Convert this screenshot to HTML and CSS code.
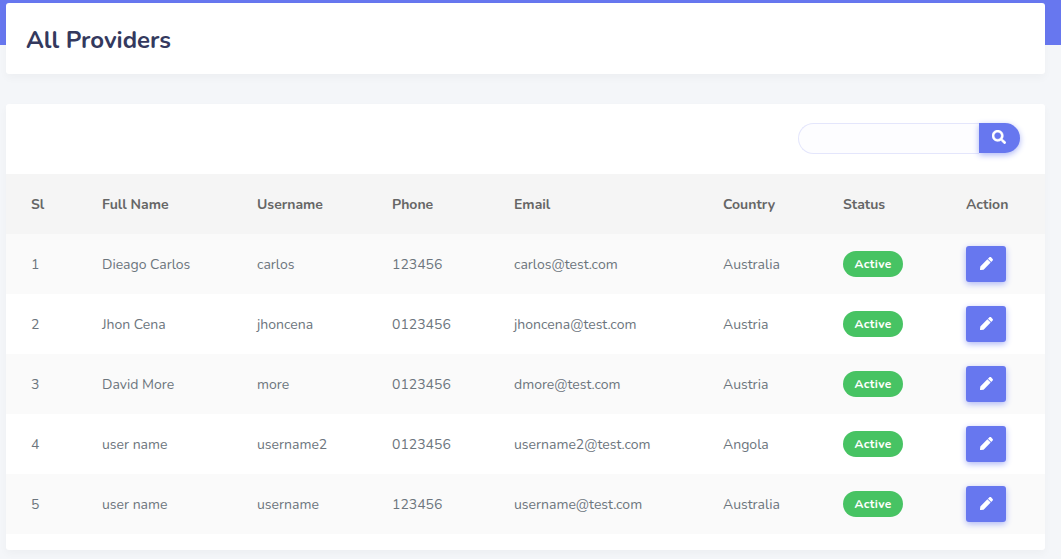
FILE: index.html
```html
<!DOCTYPE html>
<html lang="en">
<head>
<meta charset="utf-8">
<title>All Providers</title>
<link rel="stylesheet" href="styles.css">
</head>
<body>
<svg width="0" height="0" class="sprite" aria-hidden="true">
  <symbol id="pencil" viewBox="0 0 512 512"><path d="M290.740 93.240l128.020 128.020-277.990 277.990-114.140 12.600C11.350 513.540-1.560 500.620.14 485.340l12.700-114.220 277.900-277.880zm207.200-19.060l-60.110-60.110c-18.750-18.750-49.160-18.750-67.910 0l-56.550 56.550 128.020 128.020 56.550-56.550c18.750-18.760 18.750-49.160 0-67.910z"/></symbol>
  <symbol id="search" viewBox="0 0 512 512"><path d="M505 442.700L405.300 343c-4.500-4.500-10.600-7-17-7H372c27.600-35.300 44-79.700 44-128C416 93.100 322.900 0 208 0S0 93.100 0 208s93.100 208 208 208c48.300 0 92.700-16.400 128-44v16.300c0 6.400 2.500 12.500 7 17l99.700 99.700c9.400 9.400 24.600 9.400 33.900 0l28.300-28.300c9.400-9.400 9.400-24.600.1-34zM208 336c-70.700 0-128-57.200-128-128 0-70.700 57.200-128 128-128 70.700 0 128 57.200 128 128 0 70.700-57.200 128-128 128z"/></symbol>
</svg>
<main class="content">
  <header class="card title-card"><h1>All Providers</h1></header>
  <section class="card">
    <form class="search">
      <input class="search-input" type="text" aria-label="Search">
      <button class="search-btn" type="button" aria-label="Search"><svg width="14" height="14"><use href="#search"/></svg></button>
    </form>
    <table class="providers">
      <colgroup><col class="c-sl"><col class="c-name"><col class="c-user"><col class="c-phone"><col class="c-email"><col class="c-country"><col class="c-status"><col class="c-action"></colgroup>
      <thead><tr><th>Sl</th><th>Full Name</th><th>Username</th><th>Phone</th><th>Email</th><th>Country</th><th>Status</th><th>Action</th></tr></thead>
      <tbody>
        <tr><td>1</td><td>Dieago Carlos</td><td>carlos</td><td>123456</td><td>carlos@test.com</td><td>Australia</td><td class="control"><span class="badge">Active</span></td><td class="control"><button class="edit" type="button" aria-label="Edit"><svg width="13" height="13"><use href="#pencil"/></svg></button></td></tr>
        <tr><td>2</td><td>Jhon Cena</td><td>jhoncena</td><td>0123456</td><td>jhoncena@test.com</td><td>Austria</td><td class="control"><span class="badge">Active</span></td><td class="control"><button class="edit" type="button" aria-label="Edit"><svg width="13" height="13"><use href="#pencil"/></svg></button></td></tr>
        <tr><td>3</td><td>David More</td><td>more</td><td>0123456</td><td>dmore@test.com</td><td>Austria</td><td class="control"><span class="badge">Active</span></td><td class="control"><button class="edit" type="button" aria-label="Edit"><svg width="13" height="13"><use href="#pencil"/></svg></button></td></tr>
        <tr><td>4</td><td>user name</td><td>username2</td><td>0123456</td><td>username2@test.com</td><td>Angola</td><td class="control"><span class="badge">Active</span></td><td class="control"><button class="edit" type="button" aria-label="Edit"><svg width="13" height="13"><use href="#pencil"/></svg></button></td></tr>
        <tr><td>5</td><td>user name</td><td>username</td><td>123456</td><td>username@test.com</td><td>Australia</td><td class="control"><span class="badge">Active</span></td><td class="control"><button class="edit" type="button" aria-label="Edit"><svg width="13" height="13"><use href="#pencil"/></svg></button></td></tr>
      </tbody>
    </table>
  </section>
</main>
</body>
</html>
```
FILE: styles.css
```css
* { box-sizing: border-box; }
body {
  margin: 0;
  min-height: 559px;
  background: linear-gradient(#6777ef, #6777ef) 0 0 / 100% 45px no-repeat #f4f6f9;
  font: 14px/24px Nunito, Lato, sans-serif;
  color: #6c757d;
}
.sprite { display: block; }
svg { fill: currentColor; }
.content {
  display: flex;
  flex-direction: column;
  gap: 30px;
  padding: 3px 16px 9px 6px;
}
.card {
  background: #fff;
  border-radius: 3px;
  box-shadow: 0 4px 8px rgba(0, 0, 0, .03);
  padding-bottom: 16px;
}
.title-card {
  display: flex;
  align-items: center;
  height: 71px;
  padding: 3px 20px 0;
}
h1 {
  margin: 0;
  font-size: 24px;
  line-height: 28px;
  font-weight: 700;
  color: #34395e;
}
.search {
  display: flex;
  justify-content: flex-end;
  align-items: flex-start;
  height: 70px;
  padding: 19px 25px 0;
}
.search-input {
  width: 181px;
  height: 31px;
  border: 1px solid #e4e6fc;
  border-right: 0;
  border-radius: 16px 0 0 16px;
  background: #fdfdff;
  outline: 0;
}
.search-btn {
  display: flex;
  align-items: center;
  justify-content: center;
  width: 41px;
  height: 30px;
  padding: 0 1px 2px 0;
  border: 0;
  border-radius: 0 15px 15px 0;
  background: #6777ef;
  color: #fff;
  box-shadow: 0 2px 6px #acb5f6;
}
.search-btn svg {
  stroke: currentColor;
  stroke-width: 14px;
}
.providers {
  width: 100%;
  table-layout: fixed;
  border-collapse: collapse;
}
.c-sl { width: 71px; }
.c-name { width: 155px; }
.c-user { width: 135px; }
.c-phone { width: 122px; }
.c-email { width: 209px; }
.c-country { width: 120px; }
.c-status { width: 123px; }
.c-action { width: 104px; }
th, td {
  height: 60px;
  padding: 2px 0 0 25px;
  text-align: left;
  vertical-align: middle;
  white-space: nowrap;
}
td.control { padding-top: 0; }
th {
  background: #f5f5f5;
  color: #666;
  font-weight: 700;
}
tbody tr:nth-child(odd) { background: #fafafa; }
.badge {
  display: inline-block;
  width: 60px;
  height: 26px;
  border-radius: 13px;
  background: #47c363;
  color: #fff;
  font-size: 12px;
  font-weight: 700;
  line-height: 26px;
  letter-spacing: .3px;
  text-align: center;
  vertical-align: middle;
}
.edit {
  display: flex;
  align-items: center;
  justify-content: center;
  width: 40px;
  height: 36px;
  padding: 0 0 1px;
  border: 0;
  border-radius: 3px;
  background: #6777ef;
  color: #fff;
  box-shadow: 0 2px 6px #acb5f6;
}
```
